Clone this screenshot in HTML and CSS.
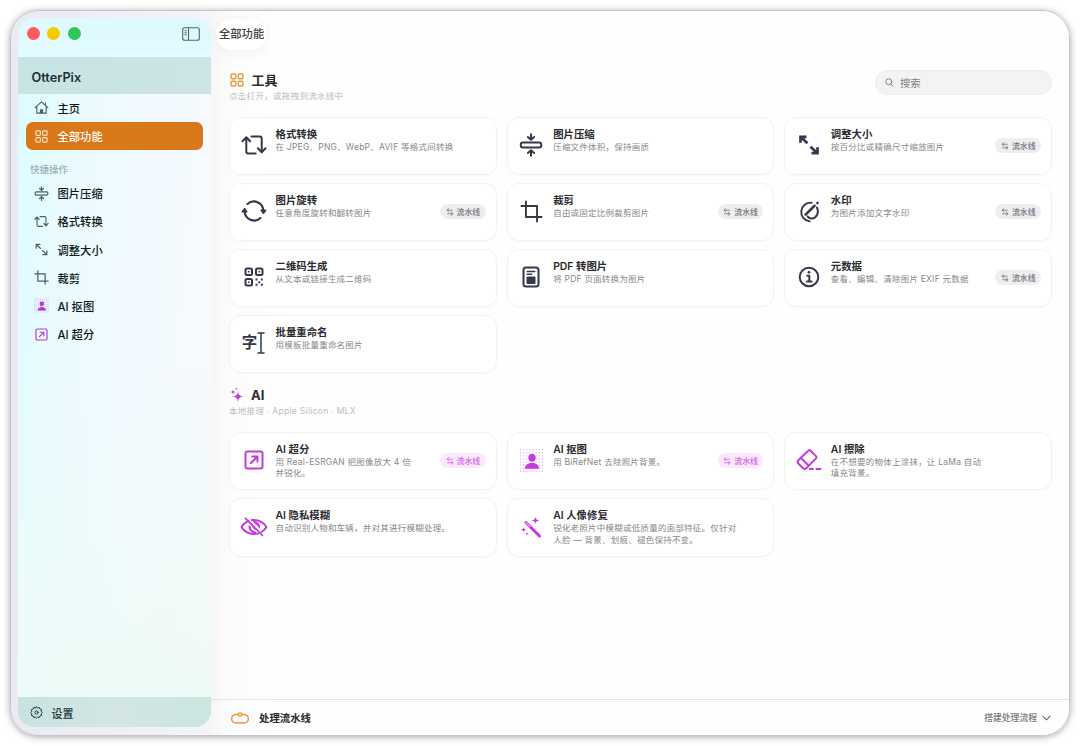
FILE: index.html
```
<!DOCTYPE html>
<html lang="zh-CN">
<head>
    <meta charset="UTF-8">
    <meta name="viewport" content="width=device-width, initial-scale=1.0">
    <title>OtterPix</title>
    <link rel="stylesheet" href="styles.css">
</head>
<body>
    <!-- Icons -->
    <svg class="sprite" width="0" height="0">
        <symbol id="i-grid" viewBox="0 0 14 14"><rect x="1" y="1" width="4.8" height="4.8" rx="1"/><rect x="8.2" y="1" width="4.8" height="4.8" rx="1"/><rect x="1" y="8.2" width="4.8" height="4.8" rx="1"/><rect x="8.2" y="8.2" width="4.8" height="4.8" rx="1"/></symbol>
        <symbol id="i-home" viewBox="0 0 16 16"><path d="M1.2 8.2 8 2l6.800 6.200M3 7v7h10V7M12.200 5.500V3"/><path class="fill" d="M6.300 14V9.800h3.400V14z"/></symbol>
        <symbol id="i-compress" viewBox="0 0 24 24"><rect x="1.800" y="9.500" width="20.400" height="5" rx="2"/><path d="M12 1.200v5.200M8.900 4 12 6.800 15.100 4M12 22.800v-5.200M8.900 20l3.100-2.800 3.100 2.800"/></symbol>
        <symbol id="i-convert" viewBox="0 0 26 24"><path d="M1.500 8.300 5.300 4.200l3.800 4.100M5.300 4.800V18.500a2 2 0 0 0 2 2h7.400M10.500 3.500h8.200a2 2 0 0 1 2 2V18.800M16.900 15.300l3.800 4.100 3.800-4.100"/></symbol>
        <symbol id="i-resize" viewBox="0 0 24 24"><path d="M3.500 9.800V3.800h6M4 4.300l6.500 6M20.500 14.200v6h-6M20 19.700l-6.500-6"/></symbol>
        <symbol id="i-crop" viewBox="0 0 24 24"><path d="M1.500 6.200h16.300v16.300M6.200 1.500v16.300h16.300"/></symbol>
        <symbol id="i-cutout" viewBox="0 0 24 24">
            <path class="dots" d="M1.500 1.500h22M1.500 4.500h22M1.500 7.500h22M1.500 10.500h22M1.500 13.500h22M1.500 16.500h22M1.500 19.500h22M1.500 22.500h22"/>
            <path class="fill" d="M12.500 5.500a3.500 3.500 0 0 1 3.500 3.800c0 2.100-1.500 4-3.500 4S9 11.400 9 9.300a3.500 3.500 0 0 1 3.500-3.800zM5.700 20c0-3.600 3-5.500 6.800-5.500s6.800 1.900 6.800 5.500z"/>
        </symbol>
        <symbol id="i-upscale" viewBox="0 0 20 20"><rect x="1.500" y="1.500" width="17" height="17" rx="2"/><path d="M6.800 13.200 13 7M8.200 6.500h5.300v5.300"/></symbol>
        <symbol id="i-rotate" viewBox="0 0 24 24"><path d="M6 5.500A8.700 8.700 0 0 1 20.600 11.500M18 18.500A8.700 8.700 0 0 1 3.400 12.500"/><path class="head" d="M18.700 11.300h4l-2 2.700zM1.300 12.700h4l-2-2.700z"/></symbol>
        <symbol id="i-watermark" viewBox="0 0 24 24"><path d="M15.200 2.800A9.700 9.700 0 1 0 13.200 22.300M20.800 7.800C23.500 13 20.500 19 15.500 19.300c-2.500.1-3.700-1-4.500-2.200"/><path class="thick" d="m9 15.300 9.300-9.300M21.200 3.200l.2-.2"/></symbol>
        <symbol id="i-qr" viewBox="0 0 20 20"><rect x="1.500" y="1.500" width="6.500" height="6.500" rx="1.500"/><rect x="12" y="1.500" width="6.500" height="6.500" rx="1.500"/><rect x="1.500" y="12" width="6.500" height="6.500" rx="1.500"/><path class="fill" d="M3.900 3.900h1.700v1.700H3.900zM14.400 3.900h1.700v1.700h-1.700zM3.900 14.400h1.700v1.700H3.900zM11.500 11.500h2v2h-2zM16.800 11.500h2v2h-2zM14.200 14.200h2v2h-2zM11.500 16.800h2v2h-2zM16.800 16.800h2v2h-2z"/></symbol>
        <symbol id="i-pdf" viewBox="0 0 18 22"><rect x="1.500" y="1.500" width="15" height="19" rx="2.500"/><path class="thin" d="M5.200 5.500h7.600M5.200 8.300h4.500"/><rect class="fill" x="4.500" y="10.500" width="9" height="7.500" rx="1"/></symbol>
        <symbol id="i-info" viewBox="0 0 22 22"><circle cx="11" cy="11" r="9.300"/><path d="M9.300 9.800h2v5.400M9 15.400h4.600"/><circle class="fill" cx="11" cy="6.300" r="1.400"/></symbol>
        <symbol id="i-ibeam" viewBox="0 0 8 22"><path d="M1 1h6M4 1v20M1 21h6"/></symbol>
        <symbol id="i-sparkles" viewBox="0 0 14 16"><path d="M8 4.500c.6 3.500 1.400 4.300 5.500 5-4.100.7-4.900 1.500-5.500 5.500-.6-4-1.400-4.800-5.500-5.500 4.100-.7 4.900-1.500 5.500-5zM3 2.500c.3 1.800.8 2.200 2.700 2.500C3.800 5.300 3.300 5.700 3 7.500 2.700 5.700 2.200 5.300.3 5 2.200 4.700 2.700 4.300 3 2.500zM6.300.2c.2 1.100.5 1.400 1.700 1.600-1.200.2-1.500.5-1.700 1.600-.2-1.100-.5-1.400-1.700-1.600 1.200-.2 1.500-.5 1.700-1.600z"/></symbol>
        <symbol id="i-eraser" viewBox="0 0 26 24"><path d="M12.300 2.700c.8-.8 1.500-.8 2.300 0L20 8.100c.8.800.8 1.500 0 2.300L10.500 20c-1.200 1.200-2.500 1.200-3.700 0L2.500 15.700c-1.200-1.200-1.200-2.500 0-3.700zM5 10l7.700 7.700M13.800 21h3.200M20.500 21h4"/></symbol>
        <symbol id="i-eyeoff" viewBox="0 0 28 20"><path d="M8.500 3.900C5.500 5.200 3 7.500 1.500 10c2.500 4.200 7 7 12.500 7 1.500 0 3-.2 4.300-.6M12 3.100c6-.5 11.500 2.200 14.500 6.900-1.200 2-3 3.700-5.200 5"/><path class="cut" d="m5.500 1.300 17 17.200"/><path class="fill" d="M9 8a6 6 0 0 0 7.600 7.800l-1.800-1.900a3.500 3.500 0 0 1-3.800-3.800zM12.500 4.300A6 6 0 0 1 19.800 11.500l-2.500-2.400a4 4 0 0 0-2.200-2.200z"/><path class="thin" d="m12.800 9.800 2.800 2.800"/></symbol>
        <symbol id="i-wand" viewBox="0 0 22 22"><path d="M6 6.500 19.500 20" class="stick"/><path class="slot" d="m6.200 6.700 3.800 3.800"/><path class="fill" d="M15.500.5c.4 2.700 1.100 3.400 4 3.900-2.900.5-3.600 1.200-4 3.900-.4-2.700-1.100-3.400-4-3.900 2.900-.5 3.600-1.200 4-3.900zM3.500 11c.3 1.900.9 2.500 3 2.800-2.100.3-2.700.9-3 2.800-.3-1.900-.9-2.500-3-2.800 2.100-.3 2.700-.9 3-2.800zM7 16c.2 1.200.6 1.500 1.700 1.700-1.100.2-1.500.5-1.700 1.700-.2-1.200-.6-1.500-1.700-1.700 1.100-.2 1.500-.5 1.700-1.700z"/></symbol>
        <symbol id="i-swap" viewBox="0 0 10 10"><path d="M3.500.8 1.200 2.800l2.300 2M1.500 2.800H8M6.500 5.200l2.300 2-2.300 2M8.500 7.200H2"/></symbol>
        <symbol id="i-gear" viewBox="0 0 16 16"><path d="m8 1 1.500 1.400 2-.5.8 1.900 2 .8-.5 2L15.200 8l-1.400 1.400.5 2-2 .8-.8 1.900-2-.5L8 15l-1.500-1.400-2 .5-.8-1.900-2-.8.5-2L.8 8l1.400-1.400-.5-2 2-.8.8-1.900 2 .5z"/><circle cx="8" cy="8" r="2"/></symbol>
        <symbol id="i-search" viewBox="0 0 12 12"><circle cx="5" cy="5" r="4"/><path d="m8 8 3 3"/></symbol>
        <symbol id="i-panel" viewBox="0 0 18 14"><rect x=".7" y=".7" width="16.600" height="12.600" rx="2"/><path d="M6.500 1v12M2.900 3.700h1.400M2.900 5.700h1.400M2.900 7.700h1.400"/></symbol>
        <symbol id="i-pipe" viewBox="0 0 18 12"><path d="M7 2.500H4.900a4.100 4.100 0 0 0 0 8.500h8.200a4.100 4.100 0 0 0 0-8.500H11"/><circle cx="9" cy="2.600" r="1.700"/></symbol>
        <symbol id="i-chevron" viewBox="0 0 10 6"><path d="m1 1 4 4 4-4"/></symbol>
    </svg>

    <div class="window">
        <aside class="sidebar">
            <div class="titlebar">
                <span class="dot red"></span>
                <span class="dot yellow"></span>
                <span class="dot green"></span>
                <svg class="icon panel"><use href="#i-panel"/></svg>
            </div>
            <div class="brand">OtterPix</div>
            <nav class="nav">
                <a class="nav-item"><svg class="icon"><use href="#i-home"/></svg>主页</a>
                <a class="nav-item active"><svg class="icon small"><use href="#i-grid"/></svg>全部功能</a>
                <div class="nav-label">快捷操作</div>
                <a class="nav-item"><svg class="icon big"><use href="#i-compress"/></svg>图片压缩</a>
                <a class="nav-item"><svg class="icon big"><use href="#i-convert"/></svg>格式转换</a>
                <a class="nav-item"><svg class="icon big"><use href="#i-resize"/></svg>调整大小</a>
                <a class="nav-item"><svg class="icon big"><use href="#i-crop"/></svg>裁剪</a>
                <a class="nav-item"><svg class="icon big ai"><use href="#i-cutout"/></svg>AI 抠图</a>
                <a class="nav-item"><svg class="icon upscale ai"><use href="#i-upscale"/></svg>AI 超分</a>
            </nav>
            <div class="settings"><svg class="icon"><use href="#i-gear"/></svg>设置</div>
        </aside>

        <main class="main">
            <header class="toolbar"><span class="page-title">全部功能</span></header>

            <div class="content">
                <div class="section-head">
                    <div>
                        <h2><svg class="icon orange"><use href="#i-grid"/></svg>工具</h2>
                        <p>点击打开，或拖拽到流水线中</p>
                    </div>
                    <div class="search"><svg class="icon"><use href="#i-search"/></svg>搜索</div>
                </div>

                <div class="cards">
                    <div class="card">
                        <div class="card-icon"><svg class="icon" width="26" height="24"><use href="#i-convert"/></svg></div>
                        <div class="card-text"><h3>格式转换</h3><p>在 JPEG、PNG、WebP、AVIF 等格式间转换</p></div>
                    </div>
                    <div class="card">
                        <div class="card-icon"><svg class="icon" width="24" height="24"><use href="#i-compress"/></svg></div>
                        <div class="card-text"><h3>图片压缩</h3><p>压缩文件体积，保持画质</p></div>
                    </div>
                    <div class="card">
                        <div class="card-icon"><svg class="icon bold" width="24" height="24"><use href="#i-resize"/></svg></div>
                        <div class="card-text"><h3>调整大小</h3><p>按百分比或精确尺寸缩放图片</p></div>
                        <span class="tag"><svg class="icon"><use href="#i-swap"/></svg>流水线</span>
                    </div>
                    <div class="card">
                        <div class="card-icon"><svg class="icon" width="26" height="26"><use href="#i-rotate"/></svg></div>
                        <div class="card-text"><h3>图片旋转</h3><p>任意角度旋转和翻转图片</p></div>
                        <span class="tag"><svg class="icon"><use href="#i-swap"/></svg>流水线</span>
                    </div>
                    <div class="card">
                        <div class="card-icon"><svg class="icon" width="23" height="23"><use href="#i-crop"/></svg></div>
                        <div class="card-text"><h3>裁剪</h3><p>自由或固定比例裁剪图片</p></div>
                        <span class="tag"><svg class="icon"><use href="#i-swap"/></svg>流水线</span>
                    </div>
                    <div class="card">
                        <div class="card-icon"><svg class="icon" width="23" height="23"><use href="#i-watermark"/></svg></div>
                        <div class="card-text"><h3>水印</h3><p>为图片添加文字水印</p></div>
                        <span class="tag"><svg class="icon"><use href="#i-swap"/></svg>流水线</span>
                    </div>
                    <div class="card">
                        <div class="card-icon"><svg class="icon" width="20" height="20"><use href="#i-qr"/></svg></div>
                        <div class="card-text"><h3>二维码生成</h3><p>从文本或链接生成二维码</p></div>
                    </div>
                    <div class="card">
                        <div class="card-icon"><svg class="icon" width="18" height="22"><use href="#i-pdf"/></svg></div>
                        <div class="card-text"><h3>PDF 转图片</h3><p>将 PDF 页面转换为图片</p></div>
                    </div>
                    <div class="card">
                        <div class="card-icon"><svg class="icon" width="22" height="22"><use href="#i-info"/></svg></div>
                        <div class="card-text"><h3>元数据</h3><p>查看、编辑、清除图片 EXIF 元数据</p></div>
                        <span class="tag"><svg class="icon"><use href="#i-swap"/></svg>流水线</span>
                    </div>
                    <div class="card">
                        <div class="card-icon"><span class="zi">字</span><svg class="icon" width="8" height="22"><use href="#i-ibeam"/></svg></div>
                        <div class="card-text"><h3>批量重命名</h3><p>用模板批量重命名图片</p></div>
                    </div>
                </div>

                <div class="section-head ai-head">
                    <div>
                        <h2><svg class="icon sparkles"><use href="#i-sparkles"/></svg>AI</h2>
                        <p>本地推理 · Apple Silicon · MLX</p>
                    </div>
                </div>

                <div class="cards ai-cards">
                    <div class="card">
                        <div class="card-icon ai"><svg class="icon" width="20" height="20"><use href="#i-upscale"/></svg></div>
                        <div class="card-text"><h3>AI 超分</h3><p>用 Real-ESRGAN 把图像放大 4 倍<br>并锐化。</p></div>
                        <span class="tag tag-ai"><svg class="icon"><use href="#i-swap"/></svg>流水线</span>
                    </div>
                    <div class="card">
                        <div class="card-icon ai"><svg class="icon" width="25" height="25"><use href="#i-cutout"/></svg></div>
                        <div class="card-text"><h3>AI 抠图</h3><p>用 BiRefNet 去除照片背景。</p></div>
                        <span class="tag tag-ai"><svg class="icon"><use href="#i-swap"/></svg>流水线</span>
                    </div>
                    <div class="card">
                        <div class="card-icon ai"><svg class="icon" width="26" height="24"><use href="#i-eraser"/></svg></div>
                        <div class="card-text"><h3>AI 擦除</h3><p>在不想要的物体上涂抹，让 LaMa 自动<br>填充背景。</p></div>
                    </div>
                    <div class="card">
                        <div class="card-icon ai"><svg class="icon" width="28" height="20"><use href="#i-eyeoff"/></svg></div>
                        <div class="card-text"><h3>AI 隐私模糊</h3><p>自动识别人物和车辆，并对其进行模糊处理。</p></div>
                    </div>
                    <div class="card">
                        <div class="card-icon ai"><svg class="icon" width="22" height="22"><use href="#i-wand"/></svg></div>
                        <div class="card-text"><h3>AI 人像修复</h3><p>锐化老照片中模糊或低质量的面部特征。仅针对<br>人脸 — 背景、划痕、褪色保持不变。</p></div>
                    </div>
                </div>
            </div>

            <footer class="pipeline">
                <svg class="icon pipe"><use href="#i-pipe"/></svg>
                <strong>处理流水线</strong>
                <span class="build">搭建处理流程</span>
                <svg class="icon chevron"><use href="#i-chevron"/></svg>
            </footer>
        </main>
    </div>
</body>
</html>
```

FILE: styles.css
```
* {
    box-sizing: border-box;
}

body {
    margin: 0;
    height: 746px;
    padding: 10px;
    overflow: hidden;
    background: #fff;
    font-family: Inter, "Noto Sans CJK SC", sans-serif;
    color: #2b2b2f;
}

h2, h3, p {
    margin: 0;
}

.sprite {
    position: absolute;
}

.icon {
    flex: none;
    fill: none;
    stroke: currentColor;
    stroke-width: 2;
    stroke-linecap: round;
    stroke-linejoin: round;
}

.fill {
    fill: currentColor;
    stroke: none;
}

.head {
    fill: currentColor;
    stroke-width: 1.5;
}

.thin {
    stroke-width: 1.4;
}

.cut {
    stroke-width: 1.7;
}

.thick {
    stroke-width: 2.6;
}

.dots {
    stroke-width: 1.2;
    stroke-dasharray: 0.01 2.99;
    opacity: 0.5;
}

.stick {
    stroke-width: 3;
}

.slot {
    stroke: #fff;
    stroke-width: 1;
}

.window {
    display: flex;
    height: 726px;
    padding: 7px 0 0 7px;
    border: 1px solid #c6c6c8;
    border-radius: 28px;
    overflow: hidden;
    background: linear-gradient(90deg, #e9eaf2 0, #f4f5fa 200px, #fff 250px);
    box-shadow: 0 1px 7px rgba(0, 0, 0, 0.34);
}

/* Sidebar */
.sidebar {
    display: flex;
    flex-direction: column;
    flex: none;
    width: 193px;
    height: 709px;
    border-radius: 16px;
    overflow: hidden;
    background: linear-gradient(180deg, transparent 50%, rgba(236, 251, 245, 0.8) 100%), linear-gradient(95deg, #dafcff 0%, #e9fbff 22%, #f2faff 55%, #f7fafc 100%);
}

.titlebar {
    display: flex;
    align-items: center;
    height: 39px;
    padding: 0 11px 8px 9px;
    background: linear-gradient(180deg, #def9ff, #e1fbff);
}

.dot {
    width: 13px;
    height: 13px;
    margin-right: 7.3px;
    border-radius: 50%;
}

.red {
    background: #ff5962;
}

.yellow {
    background: #f5c900;
}

.green {
    background: #30c759;
}

.panel {
    width: 18px;
    height: 14px;
    margin-left: auto;
    color: #4d6670;
    stroke-width: 1.1;
}

.brand {
    height: 37px;
    padding-left: 13.5px;
    background: linear-gradient(90deg, #c7e3e3, #cde5e4);
    font-size: 12.7px;
    font-weight: 600;
    line-height: 41px;
    color: #1c3034;
}

.nav {
    flex: 1;
    padding: 0 8px;
}

.nav-item {
    display: flex;
    align-items: center;
    height: 28.2px;
    padding: 0 0 0.5px 31.5px;
    border-radius: 7px;
    font-size: 11.3px;
    font-weight: 500;
    color: #0d1719;
}

.nav-item .icon {
    width: 15px;
    height: 15px;
    margin-left: -24px;
    margin-right: 9px;
    color: #48636b;
    stroke-width: 1.2;
}

.nav-item .big {
    stroke-width: 2;
}

.nav-item .upscale {
    width: 13px;
    height: 13px;
    margin-left: -23px;
    margin-right: 10px;
    stroke-width: 1.8;
}

.nav-item .ai {
    color: #b63bd0;
}

.nav-item.active {
    background: #d97818;
    color: #fff;
}

.nav-item.active .icon {
    width: 13px;
    height: 13px;
    margin-left: -23px;
    margin-right: 10px;
    color: #ffe3c4;
}

.nav-label {
    height: 29px;
    padding-left: 4px;
    font-size: 9.5px;
    font-weight: 500;
    line-height: 40px;
    color: #9db0b4;
}

.settings {
    display: flex;
    align-items: center;
    height: 30px;
    padding: 1px 0 0 12px;
    background: linear-gradient(90deg, #c8e2df, #d3e6e4 50%, #cbe5e1);
    font-size: 11px;
    font-weight: 500;
    color: #203336;
}

.settings .icon {
    width: 13px;
    height: 13px;
    margin-right: 8.5px;
    stroke-width: 1.2;
}

/* Main */
.main {
    display: flex;
    flex-direction: column;
    flex: 1;
    margin-top: -7px;
    background: linear-gradient(90deg, #f6f6f8 0, #fcfcfc 18px, #fefefe 60px);
}

.toolbar {
    height: 58.5px;
    padding: 8px 0 0 5px;
}

.page-title {
    display: inline-block;
    height: 31px;
    padding: 0 3px;
    border-radius: 16px;
    background: #fff;
    box-shadow: 0 2px 14px rgba(0, 0, 0, 0.05);
    font-size: 11.3px;
    font-weight: 500;
    line-height: 30px;
    color: #404044;
}

.content {
    flex: 1;
    padding: 0 17px 0 18px;
}

.section-head {
    display: flex;
    justify-content: space-between;
    height: 47px;
    padding-top: 1.5px;
}

.section-head h2 {
    display: flex;
    align-items: center;
    height: 18px;
    font-size: 13px;
    font-weight: 700;
    line-height: 18px;
}

.section-head p {
    height: 12px;
    margin-top: 1px;
    font-size: 8.5px;
    letter-spacing: 0.3px;
    line-height: 12px;
    color: #bcbcbf;
}

.section-head .icon {
    width: 14px;
    height: 14px;
    margin: 0 7.5px 0 1px;
}

.section-head .orange {
    color: #ed953f;
    stroke-width: 1.4;
}

.section-head .sparkles {
    width: 14px;
    height: 16px;
    margin-right: 7px;
    fill: #c33bdc;
    stroke: none;
}

.ai-head {
    height: 59px;
    padding-top: 13.5px;
}

.search {
    display: flex;
    align-items: center;
    width: 177px;
    height: 25px;
    margin-top: -1px;
    padding: 0 0 1px 9px;
    border: 1px solid #ececec;
    border-radius: 13px;
    background: #f3f3f3;
    font-size: 10.3px;
    color: #7d7d80;
}

.search .icon {
    width: 9px;
    height: 9px;
    margin: 1px 6px 0 0;
    stroke-width: 1.2;
}

.cards {
    display: grid;
    grid-template-columns: repeat(3, 1fr);
    grid-auto-rows: 58px;
    gap: 8px 10px;
}

.ai-cards {
    grid-auto-rows: 58.5px;
}

.card {
    display: flex;
    align-items: center;
    padding-right: 10px;
    border: 1px solid #f2f2f3;
    border-radius: 12px;
    background: #fff;
    box-shadow: 0 1px 3px rgba(0, 0, 0, 0.02);
}

.card-icon {
    display: flex;
    align-items: center;
    justify-content: center;
    flex: none;
    width: 47px;
    margin-right: -1.5px;
    padding-bottom: 1px;
    color: #35384a;
}

.ai {
    color: #c33bdc;
}

.bold {
    stroke-width: 2.7;
    stroke-linecap: butt;
    stroke-linejoin: miter;
}

.zi {
    font-size: 15.5px;
    font-weight: 700;
    line-height: 20px;
}

.card-icon .zi + .icon {
    stroke-width: 1.5;
}

.card-text {
    flex: 1;
    align-self: flex-start;
    padding-top: 10px;
    white-space: nowrap;
}

.card-text h3 {
    font-size: 10.4px;
    font-weight: 600;
    line-height: 14px;
}

.card-text p {
    font-size: 8.5px;
    letter-spacing: 0.23px;
    line-height: 11.7px;
    color: #87878a;
}

.tag {
    display: flex;
    align-items: center;
    justify-content: center;
    width: 45.5px;
    height: 15px;
    border-radius: 8px;
    background: #eeeef0;
    font-size: 7.9px;
    font-weight: 500;
    line-height: 14px;
    color: #707278;
}

.tag .icon {
    width: 8px;
    height: 8px;
    margin-right: 3px;
    stroke-width: 1;
}

.tag-ai {
    background: #fbe8fd;
    color: #d263e4;
}

/* Pipeline bar */
.pipeline {
    display: flex;
    align-items: center;
    height: 36px;
    padding: 0 18px 0 20px;
    border-top: 1px solid #e4e4e6;
    font-size: 10.4px;
    color: #29292c;
}

.pipe {
    width: 18px;
    height: 12px;
    margin-right: 10px;
    color: #ef923a;
    stroke-width: 1.4;
}

.build {
    margin-left: auto;
    font-size: 8.8px;
    font-weight: 500;
    color: #77777a;
}

.chevron {
    width: 9px;
    height: 6px;
    margin-left: 5px;
    color: #66666a;
    stroke-width: 1.2;
}
```
